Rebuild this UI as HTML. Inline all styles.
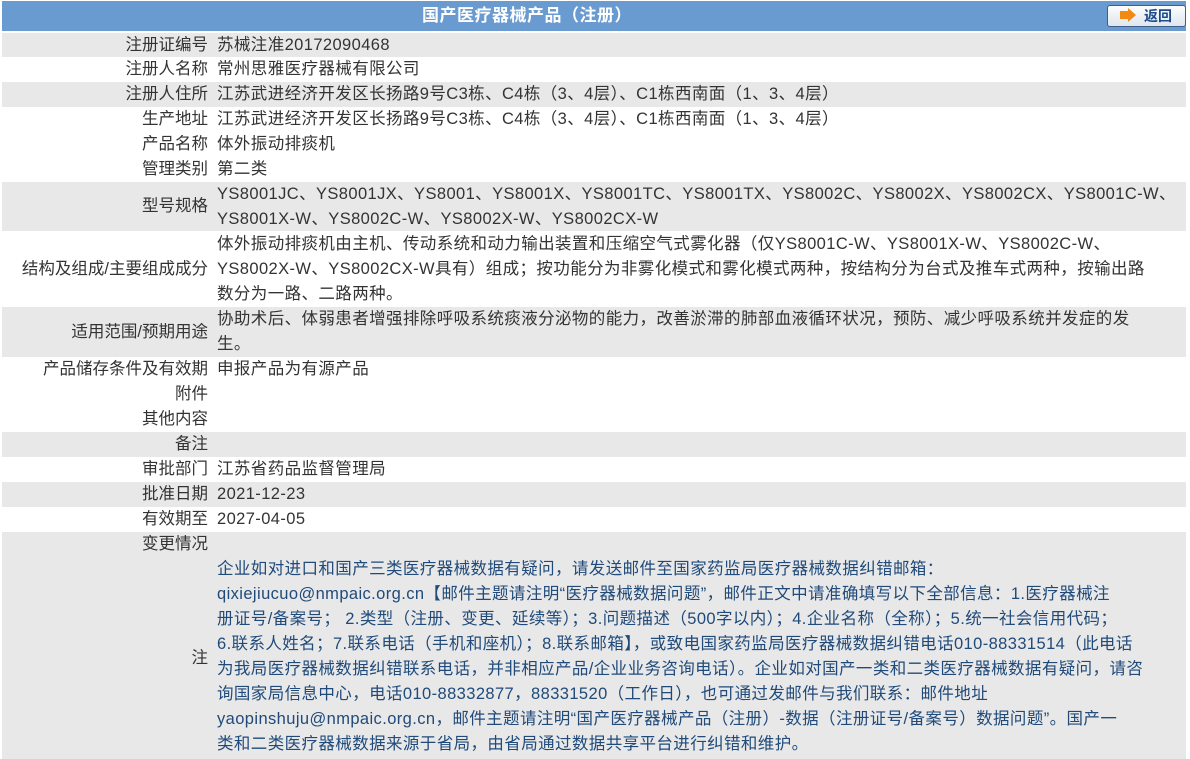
<!DOCTYPE html>
<html><head><meta charset="utf-8"><style>
*{margin:0;padding:0;box-sizing:border-box}
body{width:1190px;height:759px;background:#fff;font-family:"Liberation Sans","Noto Sans CJK SC",sans-serif;font-size:16.5px;color:#333;position:relative;overflow:hidden}
.hd{position:absolute;left:2px;top:1px;width:1184px;height:30px;background:#6a9bd0}
.hd .t{position:absolute;left:0;width:1050px;top:0;text-align:center;color:#fff;font-weight:bold;font-size:17px;line-height:30px;letter-spacing:0.5px}
.btn{position:absolute;left:1105px;top:4px;width:79px;height:22px;border:1px solid #3d5f8a;border-radius:3px;background:linear-gradient(#fdfdfd,#dfe6ee);color:#1c4b8c;font-weight:bold;font-size:14px;line-height:20px;padding-left:36px}
.btn i{position:absolute;left:12px;top:5px;width:8px;height:8px;background:#f08a10}
.btn b{position:absolute;left:20px;top:2px;width:0;height:0;border-left:8px solid #f08a10;border-top:7px solid transparent;border-bottom:7px solid transparent}
.r{position:absolute;left:2px;width:1184px}
.g{background:#e8e8e8}
.l{position:absolute;left:0;width:206px;text-align:right;top:0;bottom:0;display:flex;align-items:center;justify-content:flex-end;line-height:25px;white-space:nowrap}
.v{position:absolute;left:215px;right:0;top:0;line-height:25px;white-space:nowrap;letter-spacing:0.4px}
.n{color:#1f4a7a}
</style></head><body>
<div class="hd"><div class="t">国产医疗器械产品（注册）</div><div class="btn"><i></i><b></b>返回</div></div>

<div class="r g" style="top:33px;height:24px"><div class="l">注册证编号</div><div class="v">苏械注准20172090468</div></div>
<div class="r" style="top:57px;height:25px"><div class="l">注册人名称</div><div class="v">常州思雅医疗器械有限公司</div></div>
<div class="r g" style="top:82px;height:25px"><div class="l">注册人住所</div><div class="v">江苏武进经济开发区长扬路9号C3栋、C4栋（3、4层）、C1栋西南面（1、3、4层）</div></div>
<div class="r" style="top:107px;height:25px"><div class="l">生产地址</div><div class="v">江苏武进经济开发区长扬路9号C3栋、C4栋（3、4层）、C1栋西南面（1、3、4层）</div></div>
<div class="r" style="top:132px;height:25px"><div class="l">产品名称</div><div class="v">体外振动排痰机</div></div>
<div class="r" style="top:157px;height:25px"><div class="l">管理类别</div><div class="v">第二类</div></div>
<div class="r g" style="top:182px;height:49px"><div class="l">型号规格</div><div class="v">YS8001JC、YS8001JX、YS8001、YS8001X、YS8001TC、YS8001TX、YS8002C、YS8002X、YS8002CX、YS8001C-W、<br>YS8001X-W、YS8002C-W、YS8002X-W、YS8002CX-W</div></div>
<div class="r" style="top:232px;height:75px"><div class="l">结构及组成/主要组成成分</div><div class="v">体外振动排痰机由主机、传动系统和动力输出装置和压缩空气式雾化器（仅YS8001C-W、YS8001X-W、YS8002C-W、<br>YS8002X-W、YS8002CX-W具有）组成；按功能分为非雾化模式和雾化模式两种，按结构分为台式及推车式两种，按输出路<br>数分为一路、二路两种。</div></div>
<div class="r g" style="top:307px;height:50px"><div class="l">适用范围/预期用途</div><div class="v">协助术后、体弱患者增强排除呼吸系统痰液分泌物的能力，改善淤滞的肺部血液循环状况，预防、减少呼吸系统并发症的发<br>生。</div></div>
<div class="r" style="top:357px;height:25px"><div class="l">产品储存条件及有效期</div><div class="v">申报产品为有源产品</div></div>
<div class="r" style="top:382px;height:25px"><div class="l">附件</div></div>
<div class="r" style="top:407px;height:25px"><div class="l">其他内容</div></div>
<div class="r g" style="top:432px;height:25px"><div class="l">备注</div></div>
<div class="r" style="top:457px;height:25px"><div class="l">审批部门</div><div class="v">江苏省药品监督管理局</div></div>
<div class="r g" style="top:482px;height:25px"><div class="l">批准日期</div><div class="v">2021-12-23</div></div>
<div class="r" style="top:507px;height:25px"><div class="l">有效期至</div><div class="v">2027-04-05</div></div>
<div class="r g" style="top:532px;height:25px"><div class="l">变更情况</div></div>
<div class="r g" style="top:557px;height:202px"><div class="l">注</div><div class="v n">企业如对进口和国产三类医疗器械数据有疑问，请发送邮件至国家药监局医疗器械数据纠错邮箱：<br>qixiejiucuo@nmpaic.org.cn【邮件主题请注明“医疗器械数据问题”，邮件正文中请准确填写以下全部信息：1.医疗器械注<br>册证号/备案号； 2.类型（注册、变更、延续等）；3.问题描述（500字以内）；4.企业名称（全称）；5.统一社会信用代码；<br>6.联系人姓名；7.联系电话（手机和座机）；8.联系邮箱】，或致电国家药监局医疗器械数据纠错电话010-88331514（此电话<br>为我局医疗器械数据纠错联系电话，并非相应产品/企业业务咨询电话）。企业如对国产一类和二类医疗器械数据有疑问，请咨<br>询国家局信息中心，电话010-88332877，88331520（工作日），也可通过发邮件与我们联系：邮件地址<br>yaopinshuju@nmpaic.org.cn，邮件主题请注明“国产医疗器械产品（注册）-数据（注册证号/备案号）数据问题”。国产一<br>类和二类医疗器械数据来源于省局，由省局通过数据共享平台进行纠错和维护。</div></div>
</body></html>
